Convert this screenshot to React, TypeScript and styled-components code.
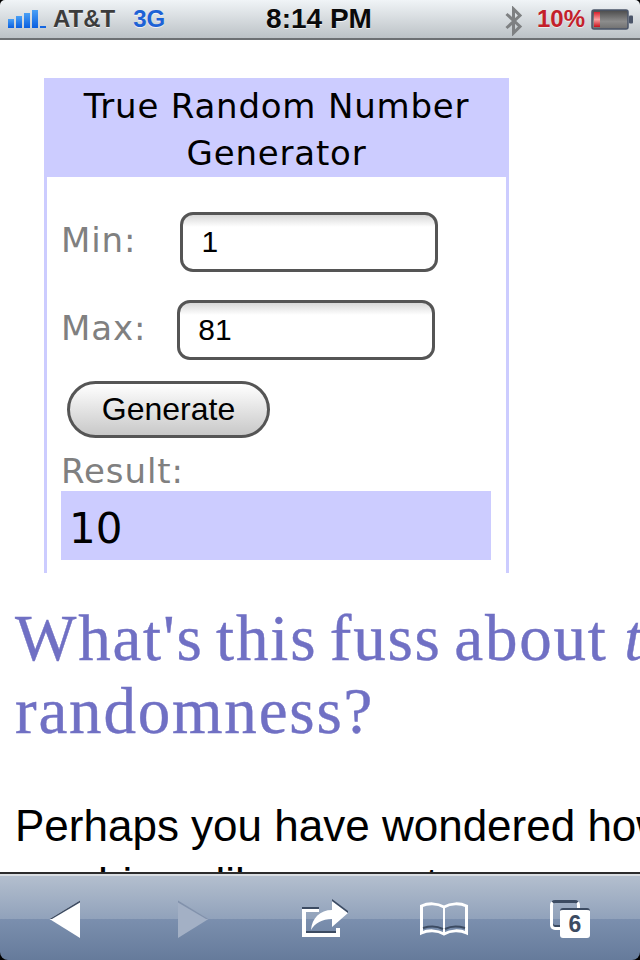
import React from 'react';
import styled, { createGlobalStyle } from 'styled-components';

const Global = createGlobalStyle`
  html, body {
    margin: 0;
    padding: 0;
    background: #000;
  }
`;

const Phone = styled.div`
  width: 640px;
  height: 960px;
  display: flex;
  flex-direction: column;
  overflow: hidden;
  background: #000;
`;

// iOS status bar
const StatusBar = styled.div`
  height: 38px;
  flex: none;
  display: grid;
  grid-template-columns: 1fr auto 1fr;
  align-items: center;
  padding: 0 6px 0 8px;
  border-radius: 5px 5px 0 0;
  border-bottom: 2px solid #6d7073;
  background: linear-gradient(#f0f4f7, #bcc2c6);
  font-family: 'Liberation Sans', Arial, sans-serif;
  font-weight: 700;
`;

const StatusLeft = styled.div`
  display: flex;
  align-items: center;
`;

const StatusRight = styled.div`
  display: flex;
  align-items: center;
  justify-content: flex-end;
`;

const Carrier = styled.span`
  font-size: 24px;
  color: #3c3c3c;
  margin-left: 6px;
  text-shadow: 0 1px 0 rgba(255, 255, 255, 0.7);
`;

const Network = styled.span`
  font-size: 24px;
  margin-left: 18px;
  color: #1d62d6;
  text-shadow: 0 1px 0 rgba(255, 255, 255, 0.7);
`;

const Clock = styled.span`
  font-size: 28px;
  margin-right: 4px;
  color: #0a0a0a;
  text-shadow: 0 1px 0 rgba(255, 255, 255, 0.7);
`;

const Battery = styled.span`
  font-size: 24px;
  color: #c4202a;
  margin: 0 6px 0 13px;
  text-shadow: 0 1px 0 rgba(255, 255, 255, 0.6);
`;

const Page = styled.div`
  flex: 1;
  min-height: 0;
  overflow: hidden;
  background: #fff;
`;

const Widget = styled.div`
  width: 465px;
  height: 495px;
  margin: 38px 0 0 44px;
  box-sizing: border-box;
  border: solid #ccccff;
  border-width: 0 3px;
  overflow: hidden;
`;

const WidgetTitle = styled.div`
  background: #ccccff;
  margin: 0 -3px;
  height: 99px;
  padding-top: 5px;
  box-sizing: border-box;
  text-align: center;
  font: 34px/47px 'DejaVu Sans', Verdana, sans-serif;
  letter-spacing: 0.8px;
  color: #000;
`;

const Field = styled.div<{ $gap: number; $top: number }>`
  display: flex;
  align-items: center;
  margin-top: ${(p) => p.$top}px;
  padding-left: 14px;
  gap: ${(p) => p.$gap}px;
`;

const Label = styled.span`
  font: 34px/40px 'DejaVu Sans', Verdana, sans-serif;
  letter-spacing: 0.9px;
  color: #808080;
  position: relative;
  top: -2px;
`;

const TextInput = styled.input`
  width: 258px;
  height: 60px;
  box-sizing: border-box;
  border: 3px solid #555;
  border-radius: 13px;
  padding: 0 0 0 18px;
  margin: 0;
  outline: none;
  font: 30px 'Liberation Sans', Arial, sans-serif;
  color: #000;
  background: linear-gradient(#d8d8d8 0, #fff 12px);
`;

const GenerateButton = styled.button`
  display: block;
  width: 203px;
  height: 57px;
  margin: 21px 0 0 20px;
  padding: 0;
  box-sizing: border-box;
  border: 3px solid #555;
  border-radius: 29px;
  font: 32px 'Liberation Sans', Arial, sans-serif;
  color: #000;
  background: linear-gradient(#fff, #c8c8c8);
`;

const ResultLabel = styled(Label)`
  display: block;
  margin: 15px 0 0 14px;
`;

const ResultBox = styled.div`
  height: 69px;
  margin: -2px 15px 0 14px;
  padding-left: 8px;
  background: #ccccff;
  font: 42px/76px 'DejaVu Sans', Verdana, sans-serif;
  color: #000;
`;

const Heading = styled.h2`
  margin: 29px 0 0 15px;
  font: 400 65px/73px 'Liberation Serif', Georgia, serif;
  letter-spacing: 1.8px;
  word-spacing: -5.5px;
  color: #7070c4;
  white-space: nowrap;
  -webkit-text-stroke: 0.4px #7070c4;

  em {
    font-style: italic;
    margin-left: 4px;
  }
`;

const Body = styled.p`
  margin: 49px 0 0 15px;
  font: 44px/58px 'Liberation Sans', Arial, sans-serif;
  color: #000;
  white-space: nowrap;
`;

// Safari bottom toolbar
const Toolbar = styled.div`
  height: 88px;
  flex: none;
  box-sizing: border-box;
  display: flex;
  align-items: center;
  padding: 3px 0 0;
  border-top: 2px solid #2c2c2c;
  border-radius: 0 0 8px 8px;
  background:
    linear-gradient(#d9dde2, #d9dde2) top / 100% 2px no-repeat,
    linear-gradient(#b5c0cf 0, #91a2bb 52%, #7b8fae 52%, #667b9b 100%);
`;

const ToolSlot = styled.div<{ $left: number }>`
  display: flex;
  margin-left: ${(p) => p.$left}px;
`;

const SignalIcon = () => (
  <svg width="39" height="20" viewBox="0 0 39 20">
    <defs>
      <linearGradient id="sig" x1="0" y1="0" x2="0" y2="1">
        <stop offset="0" stopColor="#4aa0f5" />
        <stop offset="1" stopColor="#0a5fe0" />
      </linearGradient>
    </defs>
    <rect x="0" y="10" width="6" height="9" fill="url(#sig)" />
    <rect x="8" y="7" width="6" height="12" fill="url(#sig)" />
    <rect x="16" y="4" width="6" height="15" fill="url(#sig)" />
    <rect x="24" y="1" width="6" height="18" fill="url(#sig)" />
    <rect x="32" y="17" width="6" height="2" fill="#1466e0" />
  </svg>
);

const BluetoothIcon = () => (
  <svg width="20" height="30" viewBox="0 0 20 30" style={{ marginTop: 3 }}>
    <path d="M2.5 8 L16 20.5 L9.5 27 V3 L16 9.5 L2.5 22" fill="none" stroke="#7e8082" strokeWidth="3" />
  </svg>
);

const BatteryIcon = () => (
  <svg width="43" height="21" viewBox="0 0 43 21">
    <defs>
      <linearGradient id="batFill" x1="0" y1="0" x2="0" y2="1">
        <stop offset="0" stopColor="#d8202c" />
        <stop offset="0.5" stopColor="#f8a0a0" />
        <stop offset="1" stopColor="#c8101c" />
      </linearGradient>
      <linearGradient id="batBody" x1="0" y1="0" x2="0" y2="1">
        <stop offset="0" stopColor="#4a4a4a" />
        <stop offset="0.6" stopColor="#8c8c8c" />
        <stop offset="1" stopColor="#707070" />
      </linearGradient>
    </defs>
    <rect x="1" y="1" width="36" height="19" rx="2" fill="url(#batBody)" stroke="#4a5468" strokeWidth="1.5" />
    <rect x="3" y="3" width="6" height="15" fill="url(#batFill)" />
    <rect x="38" y="6.5" width="4" height="8" rx="1" fill="#4a5468" />
  </svg>
);

const BackIcon = () => (
  <svg width="32" height="38" viewBox="0 0 32 38">
    <path d="M31 0.5 V38 L0.5 19 Z" fill="#fff" />
    <path d="M31 0.5 L0.5 19 L3 19 L31 2.5 Z" fill="#3c4b62" />
  </svg>
);

const ForwardIcon = () => (
  <svg width="32" height="38" viewBox="0 0 32 38">
    <path d="M1 0.5 V38 L31.5 19 Z" fill="#a3b0c5" />
    <path d="M1 0.5 L31.5 19 L29 19 L1 2.5 Z" fill="#8292ac" />
  </svg>
);

const ShareIcon = () => (
  <svg width="48" height="40" viewBox="0 0 48 40">
    <path d="M0 10 H17 V13 H4 V34 H34 V29 H38 V38 H0 Z" fill="#fff" />
    <path d="M0 8 H17 V10 H0 Z M4 32 H34 V34 H4 Z" fill="#3c4b62" />
    <path d="M9 31 C10 19 18 11 30 11 V2 L46 14 L30 28 V20 C20 20 13 24 9 31 Z" fill="#fff" />
    <path d="M30 2 V0 L46 12 V14 Z" fill="#3c4b62" />
  </svg>
);

const BookIcon = () => (
  <svg width="48" height="34" viewBox="0 0 48 34">
    <path
      d="M1.5 4 C8 1 17 1 24 5 C31 1 40 1 46.5 4 V31 C40 28 31 28 24 32 C17 28 8 28 1.5 31 Z"
      fill="none"
      stroke="#fff"
      strokeWidth="3"
    />
    <path d="M24 5 V32" stroke="#fff" strokeWidth="2" />
    <path d="M3 26 C10 24 17 24 23 27 M25 27 C31 24 38 24 45 26" fill="none" stroke="#3c4b62" strokeWidth="2" />
  </svg>
);

const TabsButton = styled.div`
  position: relative;
  width: 40px;
  height: 38px;
`;

const TabBack = styled.div`
  position: absolute;
  left: 0;
  top: 0;
  width: 30px;
  height: 30px;
  box-sizing: border-box;
  border: 3px solid #fff;
  border-top-color: #3c4b62;
  border-radius: 5px;
  box-shadow: inset 0 -2px 0 #3c4b62;
`;

const TabFront = styled.div`
  position: absolute;
  left: 10px;
  top: 8px;
  width: 30px;
  height: 30px;
  border-radius: 3px;
  border-top: 2px solid #3c4b62;
  box-sizing: border-box;
  background: #fff;
  text-align: center;
  font: 700 23px/28px 'Liberation Sans', Arial, sans-serif;
  color: #3c4b62;
`;

export default function App() {
  return (
    <Phone>
      <Global />
      <StatusBar>
        <StatusLeft>
          <SignalIcon />
          <Carrier>AT&amp;T</Carrier>
          <Network>3G</Network>
        </StatusLeft>
        <Clock>8:14 PM</Clock>
        <StatusRight>
          <BluetoothIcon />
          <Battery>10%</Battery>
          <BatteryIcon />
        </StatusRight>
      </StatusBar>
      <Page>
        <Widget>
          <WidgetTitle>
            True Random Number
            <br />
            Generator
          </WidgetTitle>
          <Field $gap={44} $top={35}>
            <Label>Min:</Label>
            <TextInput readOnly value="1" />
          </Field>
          <Field $gap={31} $top={28}>
            <Label>Max:</Label>
            <TextInput readOnly value="81" />
          </Field>
          <GenerateButton>Generate</GenerateButton>
          <ResultLabel>Result:</ResultLabel>
          <ResultBox>10</ResultBox>
        </Widget>
        <Heading>
          What's this fuss about <em>true</em>
          <br />
          randomness?
        </Heading>
        <Body>
          Perhaps you have wondered how
          <br />
          machines like computers
        </Body>
      </Page>
      <Toolbar>
        <ToolSlot $left={49}>
          <BackIcon />
        </ToolSlot>
        <ToolSlot $left={96}>
          <ForwardIcon />
        </ToolSlot>
        <ToolSlot $left={93}>
          <ShareIcon />
        </ToolSlot>
        <ToolSlot $left={70}>
          <BookIcon />
        </ToolSlot>
        <ToolSlot $left={82}>
          <TabsButton>
            <TabBack />
            <TabFront>6</TabFront>
          </TabsButton>
        </ToolSlot>
      </Toolbar>
    </Phone>
  );
}
